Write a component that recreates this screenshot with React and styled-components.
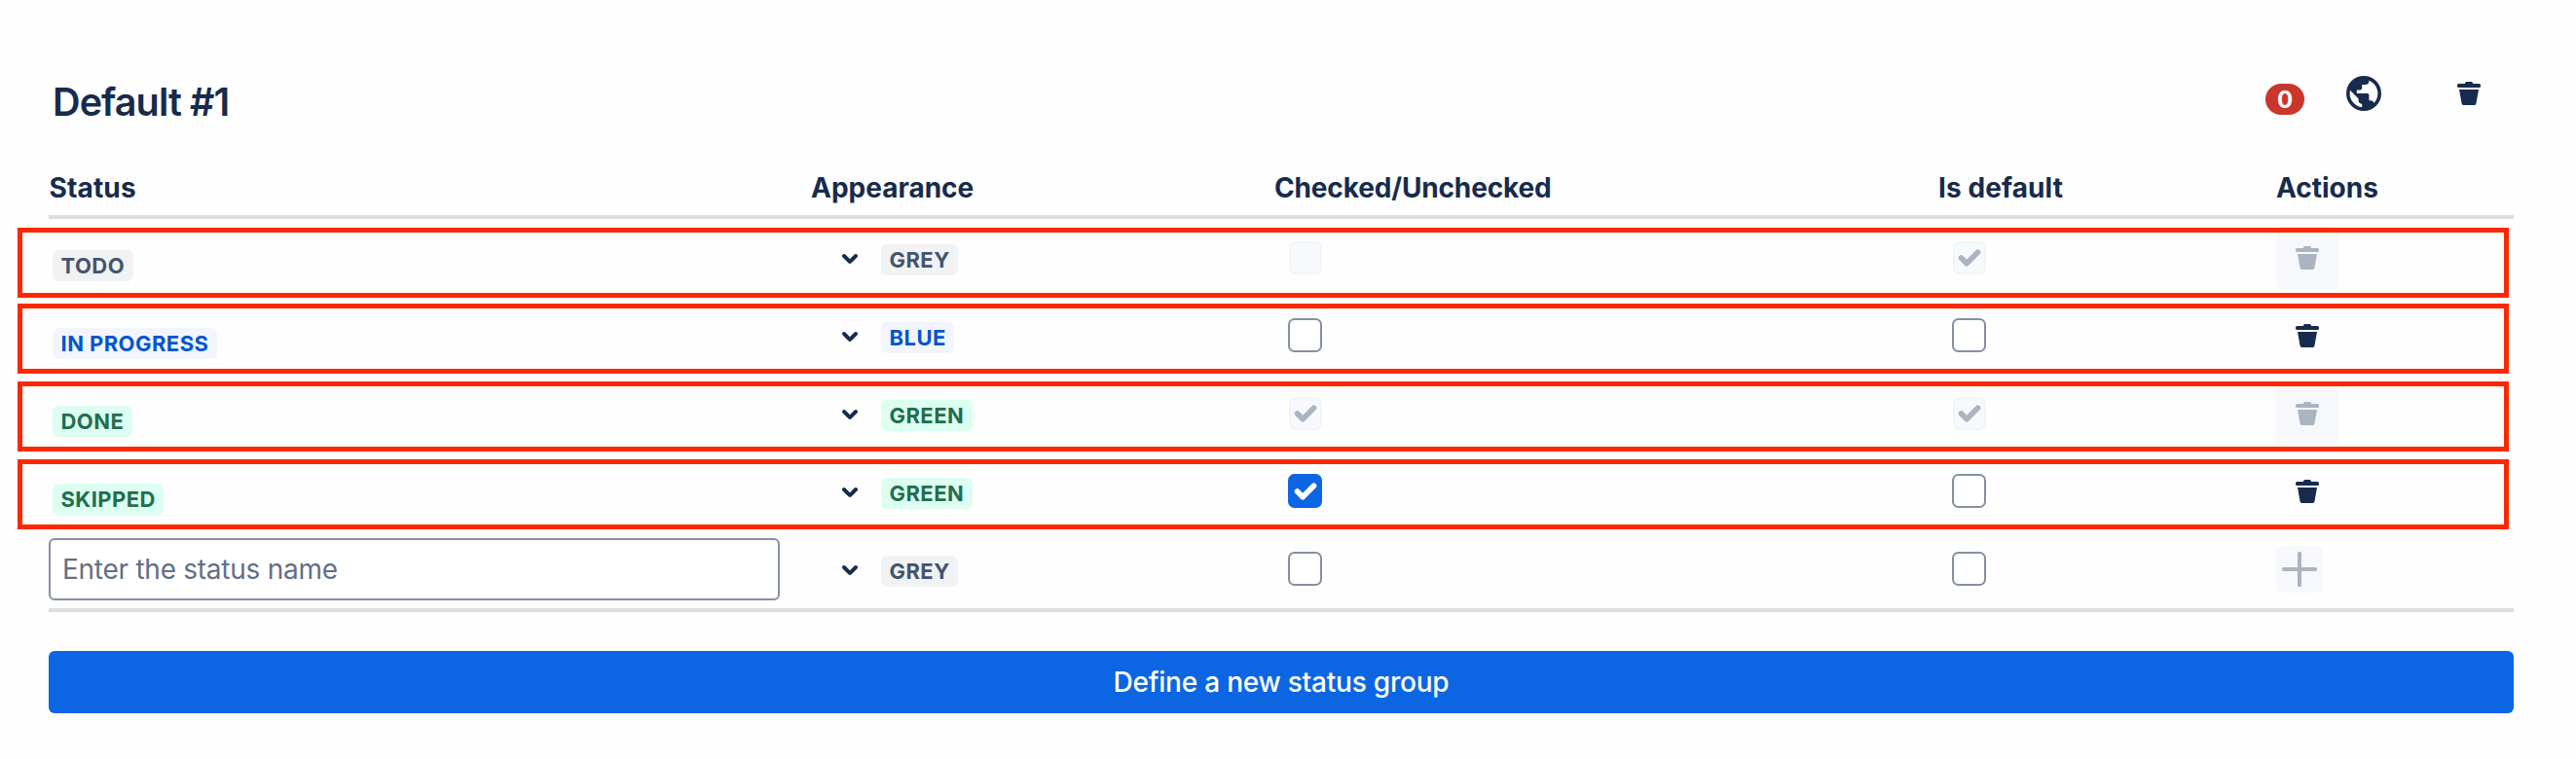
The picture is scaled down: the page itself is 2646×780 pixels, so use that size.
import React from "react";
import styled, { createGlobalStyle, css } from "styled-components";

const GlobalStyle = createGlobalStyle`
  * { box-sizing: border-box; }
  body { margin: 0; background: #fefefe; }
`;

const Page = styled.main`
  width: 2646px;
  height: 780px;
  padding: 65px 64px 0 50px;
  color: #172b4d;
  font-family: Inter, "Liberation Sans", sans-serif;
`;

const GroupHeader = styled.header`
  display: flex;
  justify-content: space-between;
  height: 96px;
`;

const Title = styled.h2`
  margin: 16px 0 0 4px;
  font-size: 39.5px;
  line-height: 48px;
  font-weight: 620;
  letter-spacing: -0.9px;
  white-space: nowrap;
`;

const Tools = styled.div`
  display: flex;
  align-items: flex-start;
  padding-right: 22px;
`;

const Badge = styled.span`
  width: 40px;
  height: 32px;
  margin: 21px 37px 0 0;
  border-radius: 16px;
  background: #c9372c;
  color: #fff;
  font-size: 24px;
  line-height: 33px;
  font-weight: 700;
  text-align: center;
`;

const ToolButton = styled.button`
  display: flex;
  width: 48px;
  height: 48px;
  margin: 7px 0 0 ${(p) => p.$gap || 0}px;
  padding: 0;
  border: 0;
  background: none;
  color: inherit;
`;

const Glyph = styled.svg`
  display: block;
  flex: none;
  width: ${(p) => p.$size || 48}px;
  height: ${(p) => p.$size || 48}px;
  fill: currentColor;
`;

const columns = css`
  display: grid;
  grid-template-columns: 783px 476px 681px 348px 244px;
`;

const HeadRow = styled.div`
  ${columns}
  height: 64px;
  border-bottom: 4px solid #dddee4;
`;

const HeadCell = styled.div`
  padding: 14px 0 0 ${(p) => p.$inset || 0}px;
  font-size: 28px;
  line-height: 36px;
  font-weight: 700;
  letter-spacing: ${(p) => p.$track || 0}px;
  white-space: nowrap;
`;

const Body = styled.div`
  border-bottom: 4px solid #dddee4;
`;

const Row = styled.div`
  ${columns}
  position: relative;
  height: 80px;
`;

const Outline = styled.div`
  position: absolute;
  z-index: 1;
  left: -32px;
  right: 5px;
  top: ${(p) => p.$top}px;
  height: 72px;
  border: 5px solid #ff2700;
  pointer-events: none;
`;

const Cell = styled.div`
  display: flex;
  align-items: center;
  padding-left: ${(p) => p.$inset || 0}px;
`;

const tones = {
  grey: ["#f1f2f4", "#44546f"],
  blue: ["#f2f6fc", "#0055cc"],
  green: ["#dcfff1", "#216e4e"],
};

const Lozenge = styled.span`
  height: 32px;
  margin-top: ${(p) => p.$drop}px;
  padding: 0 8.5px;
  border-radius: 6px;
  background: ${(p) => tones[p.$tone][0]};
  color: ${(p) => tones[p.$tone][1]};
  font-size: 22px;
  line-height: 32px;
  font-weight: 700;
  letter-spacing: 0.45px;
  white-space: nowrap;
`;

const Picker = styled.div`
  display: flex;
  align-items: center;
  gap: 8px;
`;

const boxStates = {
  off: ["#fff", "#8590a2", "#fff"],
  on: ["#0c66e4", "#0c66e4", "#fff"],
  locked: ["#f7f9fc", "#f1f4f8", "#abb4c1"],
};

const Box = styled.span`
  display: flex;
  align-items: center;
  justify-content: center;
  width: ${(p) => (p.$state === "locked" ? 34 : 35)}px;
  height: ${(p) => (p.$state === "locked" ? 34 : 35)}px;
  margin-left: ${(p) => (p.$state === "locked" ? 0 : -1)}px;
  margin-top: ${(p) => (p.$state === "locked" ? 0 : -1)}px;
  border: 2px solid ${(p) => boxStates[p.$state][1]};
  border-radius: 6.5px;
  background: ${(p) => boxStates[p.$state][0]};
  color: ${(p) => boxStates[p.$state][2]};
`;

const Action = styled.button`
  display: flex;
  align-items: center;
  justify-content: center;
  width: ${(p) => p.$size}px;
  height: ${(p) => p.$size}px;
  padding: 0;
  border: 0;
  border-radius: 6px;
  background: ${(p) => (p.$off ? "#f7f8fb" : "transparent")};
  color: ${(p) => (p.$off ? "#abb4c1" : "#172b4d")};
`;

const NameInput = styled.input`
  width: 751px;
  height: 64px;
  padding: 0 12px;
  border: 2px solid #8590a2;
  border-radius: 6px;
  background: #fff;
  font: 400 28px/40px Inter, "Liberation Sans", sans-serif;
  letter-spacing: -0.26px;
  &::placeholder { color: #626f86; opacity: 1; }
`;

const SubmitButton = styled.button`
  display: block;
  width: 100%;
  height: 64px;
  margin-top: 40px;
  border: 0;
  border-radius: 6px;
  background: #0c66e4;
  color: #fff;
  font: 500 28px/40px Inter, "Liberation Sans", sans-serif;
  letter-spacing: -0.22px;
`;

const TrashIcon = () => (
  <Glyph viewBox="0 0 24 24">
    <path d="M10 7v-.2a.8.8 0 01.8-.8h2.4a.8.8 0 01.8.8V7h3.2a.8.8 0 01.8.8v.4a.8.8 0 01-.8.8H6.8a.8.8 0 01-.8-.8v-.4a.8.8 0 01.8-.8zM7 10h10l-1.3 7.3a.85.85 0 01-.84.7H9.14a.85.85 0 01-.84-.7z" />
  </Glyph>
);

const GlobeIcon = () => (
  <Glyph viewBox="0 0 24 24">
    <path
      fillRule="evenodd"
      d="M12 21a9 9 0 100-18 9 9 0 000 18zm-.9-1.863A7.19 7.19 0 014.8 12c0-.558.072-1.089.189-1.611L9.3 14.7v.9c0 .99.81 1.8 1.8 1.8v1.737zm6.21-2.286A1.786 1.786 0 0015.6 15.6h-.9v-2.7c0-.495-.405-.9-.9-.9H8.4v-1.8h1.8c.495 0 .9-.405.9-.9V7.5h1.8c.99 0 1.8-.81 1.8-1.8v-.369c2.637 1.071 4.5 3.654 4.5 6.669a7.17 7.17 0 01-1.89 4.851z"
    />
  </Glyph>
);

const ChevronIcon = () => (
  <Glyph viewBox="0 0 24 24">
    <path d="M8.292 10.293a1.009 1.009 0 000 1.419l2.939 2.965c.218.215.5.322.779.322s.556-.107.769-.322l2.93-2.955a1.01 1.01 0 000-1.419.987.987 0 00-1.406 0l-2.298 2.317-2.307-2.327a.99.99 0 00-1.406 0z" />
  </Glyph>
);

const CheckIcon = () => (
  <Glyph viewBox="6 6 12 12" $size={34}>
    <path d="M9.707 11.293a1 1 0 10-1.414 1.414l2 2a1 1 0 001.414 0l4-4a1 1 0 10-1.414-1.414L11 12.586l-1.293-1.293z" />
  </Glyph>
);

const PlusIcon = () => (
  <Glyph viewBox="0 0 36 36" $size={36}>
    <rect x="16" y="0" width="4" height="36" rx="1.5" />
    <rect x="0" y="16" width="36" height="4" rx="1.5" />
  </Glyph>
);

const Checkbox = ({ checked, locked }) => (
  <Box $state={locked ? "locked" : checked ? "on" : "off"}>{checked && <CheckIcon />}</Box>
);

const Appearance = ({ tone }) => (
  <Cell $inset={16}>
    <Picker>
      <ChevronIcon />
      <Lozenge $tone={tone} $drop={4}>{tone.toUpperCase()}</Lozenge>
    </Picker>
  </Cell>
);

const statuses = [
  { name: "TODO", nameTone: "grey", tone: "grey", locked: true, checked: false, isDefault: true },
  { name: "IN PROGRESS", nameTone: "blue", tone: "blue" },
  { name: "DONE", nameTone: "green", tone: "green", locked: true, checked: true, isDefault: true },
  { name: "SKIPPED", nameTone: "green", tone: "green", checked: true },
];

export default function App() {
  return (
    <>
      <GlobalStyle />
      <Page>
        <GroupHeader>
          <Title>Default #1</Title>
          <Tools>
            <Badge>0</Badge>
            <ToolButton aria-label="Scope"><GlobeIcon /></ToolButton>
            <ToolButton aria-label="Delete group" $gap={60}><TrashIcon /></ToolButton>
          </Tools>
        </GroupHeader>
        <HeadRow>
          <HeadCell $inset={0.5} $track={0.15}>Status</HeadCell>
          <HeadCell>Appearance</HeadCell>
          <HeadCell $track={-0.15}>Checked/Unchecked</HeadCell>
          <HeadCell $inset={1} $track={0.1}>Is default</HeadCell>
          <HeadCell>Actions</HeadCell>
        </HeadRow>
        <Body>
          {statuses.map((s, i) => (
            <Row key={s.name}>
              <Cell $inset={4}><Lozenge $tone={s.nameTone} $drop={16}>{s.name}</Lozenge></Cell>
              <Appearance tone={s.tone} />
              <Cell $inset={15}><Checkbox checked={s.checked} locked={s.locked} /></Cell>
              <Cell $inset={16}><Checkbox checked={s.isDefault} locked={s.locked} /></Cell>
              <Cell><Action $size={64} $off={s.locked} aria-label="Delete"><TrashIcon /></Action></Cell>
              <Outline $top={i === 0 ? 9 : 7} />
            </Row>
          ))}
          <Row>
            <Cell><NameInput placeholder="Enter the status name" /></Cell>
            <Appearance tone="grey" />
            <Cell $inset={15}><Checkbox /></Cell>
            <Cell $inset={16}><Checkbox /></Cell>
            <Cell><Action $size={48} $off aria-label="Add"><PlusIcon /></Action></Cell>
          </Row>
        </Body>
        <SubmitButton>Define a new status group</SubmitButton>
      </Page>
    </>
  );
}
